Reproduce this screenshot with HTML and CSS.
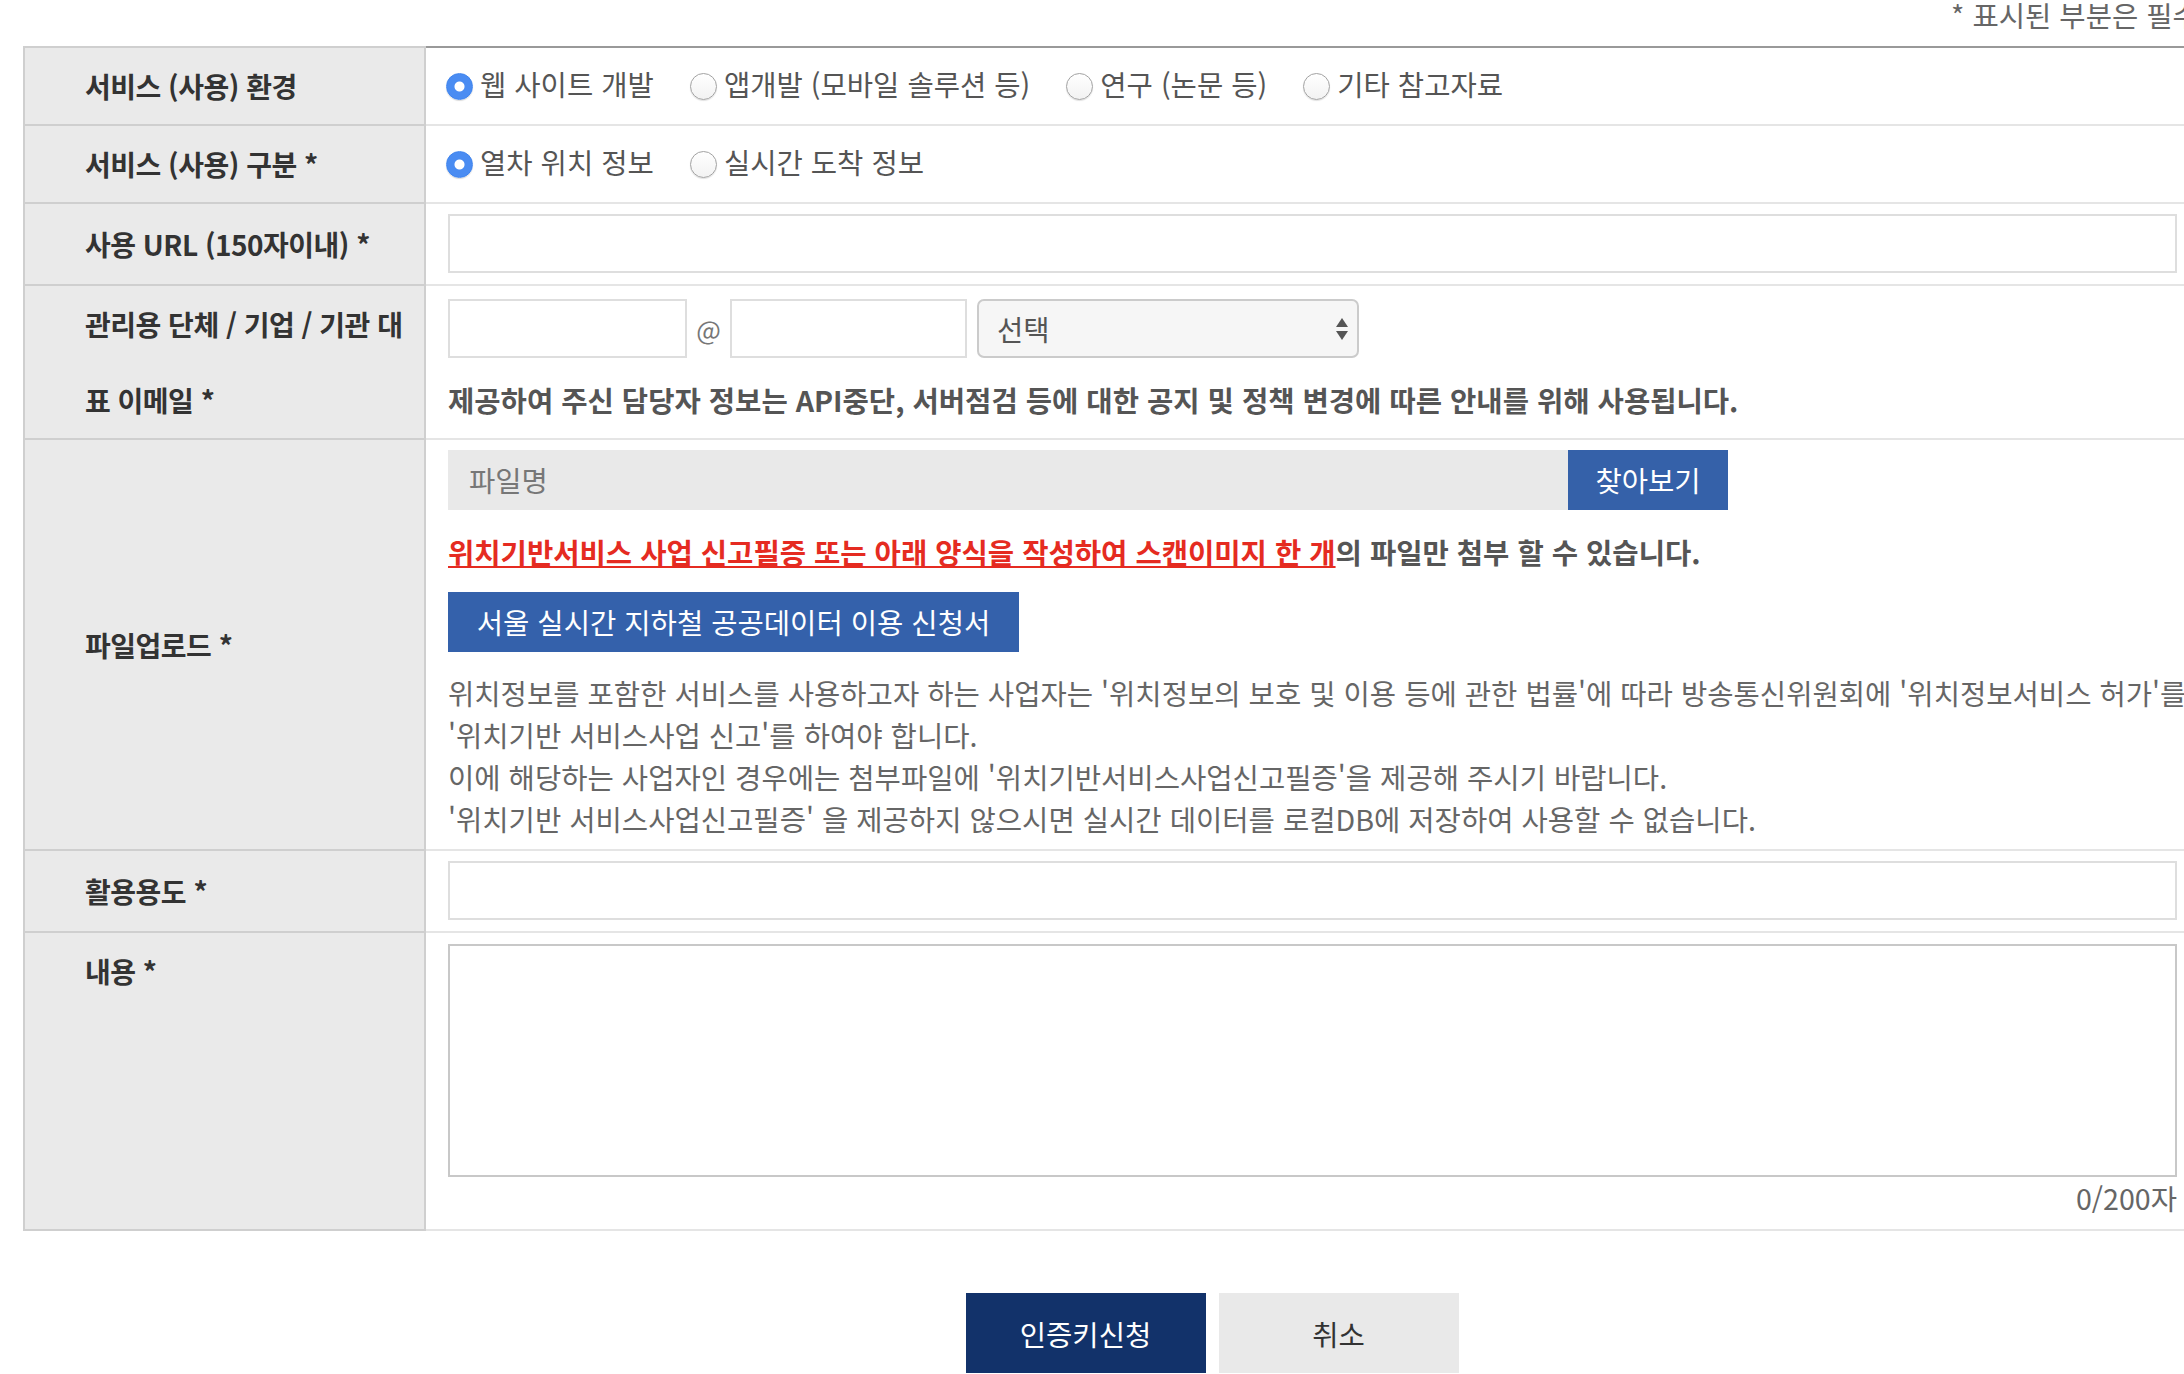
FILE: index.html
```html
<!DOCTYPE html>
<html lang="ko">
<head>
    <meta charset="UTF-8">
    <meta name="viewport" content="width=device-width, initial-scale=1.0">
    <title>인증키 신청 - 실시간 지하철</title>
    <link rel="stylesheet" href="styles.css">
</head>
<body>
    <div class="apply-wrap">
        <p class="required-note">* 표시된 부분은 필수 입력항목입니다.</p>

        <form class="apply-form" onsubmit="return false;">
            <table class="apply-table">
                <tbody>
                    <tr>
                        <th>서비스 (사용) 환경</th>
                        <td>
                            <label class="radio"><input type="radio" name="env" checked>웹 사이트 개발</label>
                            <label class="radio"><input type="radio" name="env">앱개발 (모바일 솔루션 등)</label>
                            <label class="radio"><input type="radio" name="env">연구 (논문 등)</label>
                            <label class="radio"><input type="radio" name="env">기타 참고자료</label>
                        </td>
                    </tr>
                    <tr>
                        <th>서비스 (사용) 구분 *</th>
                        <td>
                            <label class="radio"><input type="radio" name="type" checked>열차 위치 정보</label>
                            <label class="radio"><input type="radio" name="type">실시간 도착 정보</label>
                        </td>
                    </tr>
                    <tr>
                        <th>사용 URL (150자이내) *</th>
                        <td class="field-cell">
                            <input type="text" class="text-input wide" maxlength="150">
                        </td>
                    </tr>
                    <tr>
                        <th>관리용 단체 / 기업 / 기관 대표 이메일 *</th>
                        <td class="email-cell">
                            <div class="email-row">
                                <input type="text" class="text-input email-id">
                                <span class="email-at">@</span>
                                <input type="text" class="text-input email-domain">
                                <span class="select-wrap">
                                    <select class="domain-select">
                                        <option>선택</option>
                                        <option>naver.com</option>
                                        <option>gmail.com</option>
                                        <option>daum.net</option>
                                        <option>직접입력</option>
                                    </select>
                                    <svg class="select-arrows" width="14" height="26" viewBox="0 0 14 26">
                                        <path d="M7 2 L13 11 L1 11 Z" fill="#555"/>
                                        <path d="M1 15 L13 15 L7 24 Z" fill="#555"/>
                                    </svg>
                                </span>
                            </div>
                            <p class="notice-text">제공하여 주신 담당자 정보는 API중단, 서버점검 등에 대한 공지 및 정책 변경에 따른 안내를 위해 사용됩니다.</p>
                        </td>
                    </tr>
                    <tr>
                        <th>파일업로드 *</th>
                        <td class="upload-cell">
                            <div class="file-row">
                                <div class="file-name">파일명</div>
                                <button type="button" class="file-button">찾아보기</button>
                            </div>
                            <p class="notice-text"><a href="#" class="warn-link">위치기반서비스 사업 신고필증 또는 아래 양식을 작성하여 스캔이미지 한 개</a>의 파일만 첨부 할 수 있습니다.</p>
                            <button type="button" class="form-download">서울 실시간 지하철 공공데이터 이용 신청서</button>
                            <p class="guide-text">
                                위치정보를 포함한 서비스를 사용하고자 하는 사업자는 '위치정보의 보호 및 이용 등에 관한 법률'에 따라 방송통신위원회에 '위치정보서비스 허가'를<br>
                                '위치기반 서비스사업 신고'를 하여야 합니다.<br>
                                이에 해당하는 사업자인 경우에는 첨부파일에 '위치기반서비스사업신고필증'을 제공해 주시기 바랍니다.<br>
                                '위치기반 서비스사업신고필증' 을 제공하지 않으시면 실시간 데이터를 로컬DB에 저장하여 사용할 수 없습니다.
                            </p>
                        </td>
                    </tr>
                    <tr>
                        <th>활용용도 *</th>
                        <td class="field-cell">
                            <input type="text" class="text-input wide">
                        </td>
                    </tr>
                    <tr>
                        <th class="top">내용 *</th>
                        <td class="content-cell">
                            <textarea class="content-input" maxlength="200"></textarea>
                            <div class="char-count"><span id="charCount">0</span>/200자</div>
                        </td>
                    </tr>
                </tbody>
            </table>

            <div class="button-group">
                <button type="submit" class="submit-button">인증키신청</button>
                <button type="button" class="cancel-button">취소</button>
            </div>
        </form>
    </div>

    <script>
        // 글자수 표시
        var content = document.querySelector('.content-input');
        content.addEventListener('input', function() {
            document.getElementById('charCount').textContent = content.value.length;
        });
    </script>
</body>
</html>
```

FILE: styles.css
```css
* {
    margin: 0;
    padding: 0;
    box-sizing: border-box;
}

html, body {
    overflow: hidden;
}

body {
    font-family: "Noto Sans CJK KR", "Noto Sans", sans-serif;
    font-size: 28.6px;
    color: #333;
    background: #fff;
}

.apply-wrap {
    width: 2378px;
    margin-left: 23px;
}

.required-note {
    height: 46px;
    line-height: 30px;
    text-align: right;
    padding-right: 2px;
    color: #666;
}

.apply-table {
    width: 100%;
    table-layout: fixed;
    border-collapse: separate;
    border-spacing: 0;
}

.apply-table th {
    width: 403px;
    background: #eaeaea;
    border-left: 2px solid #cfcfcf;
    border-right: 2px solid #cfcfcf;
    border-bottom: 2px solid #cfcfcf;
    padding: 0 10px 0 60px;
    font-size: 28px;
    letter-spacing: -0.5px;
    line-height: 76px;
    text-align: left;
    font-weight: 700;
    color: #333;
    vertical-align: middle;
}

.apply-table th.top {
    vertical-align: top;
}

.apply-table td {
    border-bottom: 2px solid #e5e5e5;
    padding: 0 22px 0 22px;
    line-height: 42px;
    vertical-align: middle;
    color: #555;
}

.apply-table tr:first-child th {
    border-top: 2px solid #cfcfcf;
}

.apply-table tr:first-child td {
    border-top: 2px solid #999;
}

/* 라디오 */
.radio {
    display: inline-flex;
    align-items: center;
    margin-right: 30px;
    cursor: pointer;
    color: #555;
}

.radio input {
    appearance: none;
    -webkit-appearance: none;
    width: 27px;
    height: 27px;
    margin: 6px 7px 0 -2px;
    border-radius: 50%;
    border: 1px solid #a2a2a2;
    background: linear-gradient(#fff, #f2f2f2);
    box-shadow: 0 1px 1px rgba(0, 0, 0, 0.12);
    flex-shrink: 0;
}

.radio input:checked {
    border-color: #3f84ee;
    background: radial-gradient(circle, #fff 0 4.5px, #4a8cf2 5.5px);
    box-shadow: 0 1px 1px rgba(0, 0, 0, 0.15);
}

/* 입력 */
.text-input {
    height: 59px;
    border: 2px solid #dedede;
    background: #fff;
    font: inherit;
    padding: 0 14px;
    outline: none;
}

.text-input.wide {
    display: block;
    width: 1729px;
}

.field-cell {
    padding-top: 10px !important;
    padding-bottom: 11px !important;
}

.email-cell {
    padding-top: 13px !important;
    padding-bottom: 17px !important;
}

.email-row {
    display: flex;
    align-items: center;
}

.email-id {
    width: 239px;
}

.email-domain {
    width: 237px;
}

.email-at {
    width: 43px;
    text-align: center;
    color: #777;
    font-size: 26px;
}

.select-wrap {
    position: relative;
    margin-left: 10px;
}

.domain-select {
    appearance: none;
    -webkit-appearance: none;
    width: 382px;
    height: 59px;
    border: 2px solid #cbcbcb;
    border-radius: 7px;
    background: #f6f6f6;
    font: inherit;
    color: #555;
    padding: 0 18px;
    outline: none;
}

.select-arrows {
    position: absolute;
    right: 10px;
    top: 17px;
    pointer-events: none;
}

.notice-text {
    margin-top: 21px;
    font-weight: 700;
    color: #555;
}

.warn-link {
    color: #e52b21;
    text-decoration: underline;
}

/* 파일업로드 */
.upload-cell {
    padding-top: 10px !important;
    padding-bottom: 9px !important;
}

.file-row {
    display: flex;
    height: 60px;
}

.file-name {
    width: 1120px;
    background: #e9e9e9;
    line-height: 60px;
    padding-left: 21px;
    color: #777;
}

.file-button {
    width: 160px;
    border: none;
    background: #3561a9;
    color: #fff;
    font: inherit;
    cursor: pointer;
}

.form-download {
    display: block;
    margin-top: 19px;
    width: 571px;
    height: 60px;
    border: none;
    background: #3461ab;
    color: #fff;
    font: inherit;
    cursor: pointer;
}

.guide-text {
    margin-top: 20px;
    white-space: nowrap;
    color: #666;
}

/* 내용 */
.content-cell {
    padding-top: 11px !important;
    padding-bottom: 10px !important;
}

.content-input {
    display: block;
    width: 1729px;
    height: 233px;
    border: 2px solid #c8c8c8;
    font: inherit;
    padding: 10px 14px;
    resize: none;
    outline: none;
}

.char-count {
    width: 1729px;
    text-align: right;
    color: #666;
}

/* 버튼 */
.button-group {
    margin-top: 62px;
    display: flex;
    justify-content: center;
    gap: 13px;
}

.submit-button,
.cancel-button {
    width: 240px;
    height: 80px;
    border: none;
    font: inherit;
    cursor: pointer;
}

.submit-button {
    background: #12326a;
    color: #fff;
}

.cancel-button {
    background: #e9e9e9;
    color: #333;
}
```
